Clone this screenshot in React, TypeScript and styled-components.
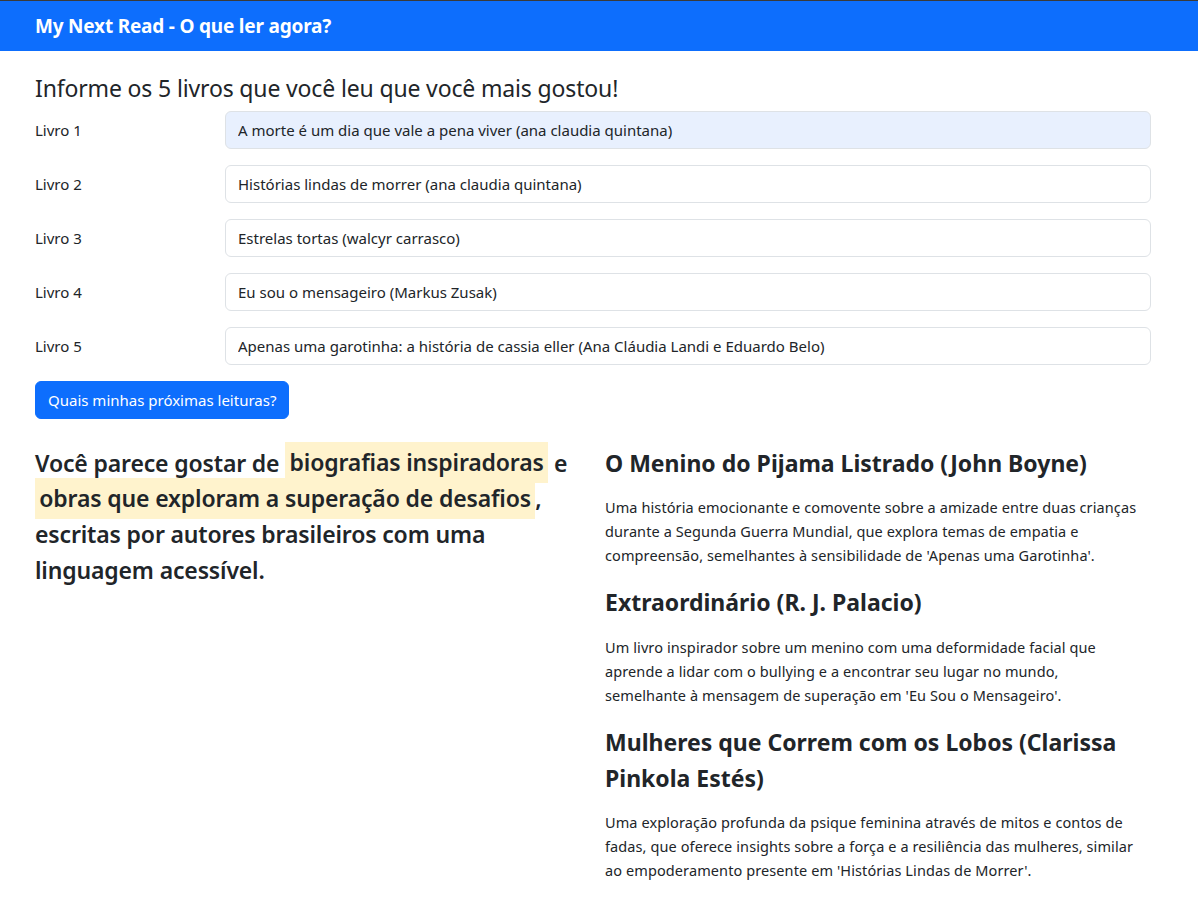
import React from "react";
import styled, { createGlobalStyle } from "styled-components";

const GlobalStyle = createGlobalStyle`
  body {
    margin: 0;
    background: #fff;
    color: #212529;
    font-family: "Noto Sans", "Open Sans", sans-serif;
    font-size: 16px;
    line-height: 1.5;
  }
  * {
    box-sizing: border-box;
  }
`;

const Navbar = styled.nav`
  height: 51px;
  border-top: 1px solid #3a3a3a;
  background-color: #0d6efd;
  display: flex;
  align-items: center;
  padding: 0 35px;
`;

const Brand = styled.span`
  color: #fff;
  font-size: 19px;
  font-weight: 700;
  letter-spacing: -0.2px;
`;

const Container = styled.main`
  width: 1116px;
  margin-left: 35px;
  padding-bottom: 24px;
`;

const Title = styled.h4`
  margin: 24px 0 8px;
  font-size: 23px;
  font-weight: 400;
  line-height: 1.2;
  letter-spacing: -0.15px;
`;

const FieldRow = styled.div`
  display: grid;
  grid-template-columns: 190px 1fr;
  align-items: center;
  margin-bottom: 16px;
`;

const Label = styled.label`
  font-size: 15px;
  padding-top: 1px;
`;

const Input = styled.input<{ $filled?: boolean }>`
  height: 38px;
  width: 100%;
  padding: 6px 12px;
  border: 1px solid #dee2e6;
  border-radius: 6px;
  background-color: ${(p) => (p.$filled ? "#e8f0fe" : "#fff")};
  color: #212529;
  font-family: inherit;
  font-size: 15px;
  outline: none;
`;

const Button = styled.button`
  height: 38px;
  padding: 6px 12px;
  border: 1px solid #0d6efd;
  border-radius: 6px;
  background-color: #0d6efd;
  color: #fff;
  font-family: inherit;
  font-size: 15px;
  cursor: pointer;
`;

const Results = styled.section`
  display: grid;
  grid-template-columns: 546px 546px;
  column-gap: 24px;
  margin-top: 27px;
`;

const Summary = styled.p`
  margin: 0;
  font-size: 23px;
  font-weight: 600;
  line-height: 1.55;
  letter-spacing: -0.15px;
`;

const Mark = styled.mark`
  background-color: #fff3cd;
  color: inherit;
  padding: 0.1875em;
`;

const Book = styled.article`
  & + & {
    margin-top: 18px;
  }
`;

const BookTitle = styled.h3`
  margin: 0 0 14px;
  font-size: 23px;
  font-weight: 700;
  line-height: 1.55;
`;

const BookText = styled.p`
  margin: 0;
  max-width: 536px;
  font-size: 14.5px;
  line-height: 24px;
  letter-spacing: 0.1px;
`;

const books = [
  "A morte é um dia que vale a pena viver (ana claudia quintana)",
  "Histórias lindas de morrer (ana claudia quintana)",
  "Estrelas tortas (walcyr carrasco)",
  "Eu sou o mensageiro (Markus Zusak)",
  "Apenas uma garotinha: a história de cassia eller (Ana Cláudia Landi e Eduardo Belo)",
];

const suggestions = [
  {
    title: "O Menino do Pijama Listrado (John Boyne)",
    text: "Uma história emocionante e comovente sobre a amizade entre duas crianças durante a Segunda Guerra Mundial, que explora temas de empatia e compreensão, semelhantes à sensibilidade de 'Apenas uma Garotinha'.",
  },
  {
    title: "Extraordinário (R. J. Palacio)",
    text: "Um livro inspirador sobre um menino com uma deformidade facial que aprende a lidar com o bullying e a encontrar seu lugar no mundo, semelhante à mensagem de superação em 'Eu Sou o Mensageiro'.",
  },
  {
    title: "Mulheres que Correm com os Lobos (Clarissa Pinkola Estés)",
    text: "Uma exploração profunda da psique feminina através de mitos e contos de fadas, que oferece insights sobre a força e a resiliência das mulheres, similar ao empoderamento presente em 'Histórias Lindas de Morrer'.",
  },
];

const App = () => {
  return (
    <>
      <GlobalStyle />
      <Navbar>
        <Brand>My Next Read - O que ler agora?</Brand>
      </Navbar>
      <Container>
        <Title>Informe os 5 livros que você leu que você mais gostou!</Title>
        {books.map((book, i) => (
          <FieldRow key={i}>
            <Label htmlFor={`livro${i + 1}`}>Livro {i + 1}</Label>
            <Input
              id={`livro${i + 1}`}
              defaultValue={book}
              $filled={i === 0}
            />
          </FieldRow>
        ))}
        <Button type="button">Quais minhas próximas leituras?</Button>
        <Results>
          <Summary>
            Você parece gostar de <Mark>biografias inspiradoras</Mark> e{" "}
            <Mark>obras que exploram a superação de desafios</Mark>, escritas
            por autores brasileiros com uma linguagem acessível.
          </Summary>
          <div>
            {suggestions.map((s) => (
              <Book key={s.title}>
                <BookTitle>{s.title}</BookTitle>
                <BookText>{s.text}</BookText>
              </Book>
            ))}
          </div>
        </Results>
      </Container>
    </>
  );
};

export default App;
